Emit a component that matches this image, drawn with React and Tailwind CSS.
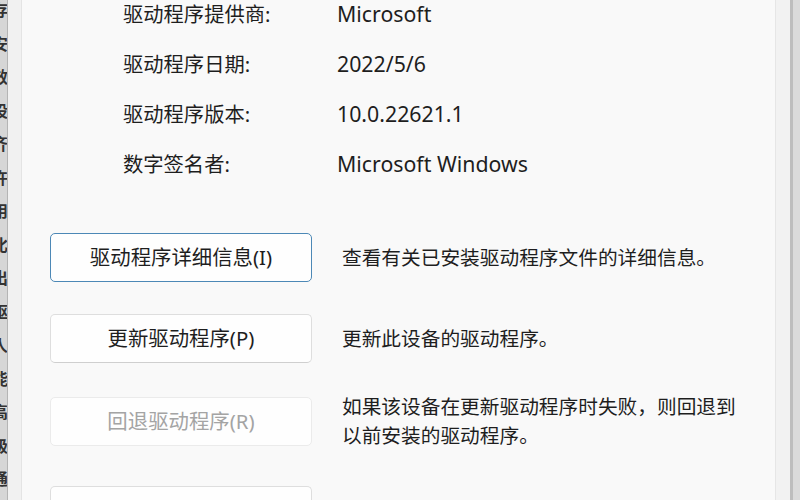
import React from 'react'

// ── Data ──────────────────────────────────────────────────────────────────
const info = [
  { label: '驱动程序提供商:', value: 'Microsoft' },
  { label: '驱动程序日期:', value: '2022/5/6' },
  { label: '驱动程序版本:', value: '10.0.22621.1' },
  { label: '数字签名者:', value: 'Microsoft Windows' },
]

const actions = [
  { text: '驱动程序详细信息(I)', desc: ['查看有关已安装驱动程序文件的详细信息。'], focused: true, mt: 'mt-0' },
  { text: '更新驱动程序(P)', desc: ['更新此设备的驱动程序。'], mt: 'mt-[32px]' },
  { text: '回退驱动程序(R)', desc: ['如果该设备在更新驱动程序时失败，则回退到', '以前安装的驱动程序。'], disabled: true, mt: 'mt-[29px]' },
  { text: '卸载设备(U)', desc: ['从系统中删除设备(高级)。'], mt: 'mt-[36px]' },
]

// background window peeking out on the left
const behind = ['存', '安', '效', '设', '齐', '许', '用', '比', '出', '驱', '人', '能', '高', '级', '通', '属']

function ActionButton({ text, focused, disabled }) {
  const border = focused
    ? 'border-[1.5px] border-[#4c88b6]'
    : disabled
      ? 'border border-[#ebebeb]'
      : 'border border-[#dedede] border-b-[#cfcfcf]'
  return (
    <button
      disabled={disabled}
      className={`w-[262px] h-[49px] shrink-0 rounded-[5px] bg-[#fefefe] ${border} ${disabled ? 'text-[#a4a4a4]' : 'text-[#1e1e1e]'} text-[20.4px] leading-none`}
    >
      {text}
    </button>
  )
}

export default function App() {
  return (
    <div
      className="w-[800px] h-[500px] overflow-hidden flex bg-[#f9f9f9] text-[#1e1e1e]"
      style={{ fontFamily: '"Noto Sans", "Noto Sans CJK SC", sans-serif' }}
    >
      {/* window behind */}
      <div className="w-[8px] shrink-0 overflow-hidden bg-[#d6d6d6] border-r border-[#b4b4b4]">
        <div className="-ml-[8px] -mt-[6px] flex flex-col text-[16px] font-bold leading-[33.5px] text-[#333333]">
          {behind.map((c, i) => <span key={i}>{c}</span>)}
        </div>
      </div>
      <div className="w-[14px] shrink-0 bg-[#f1f1f1] border-r border-[#e4e4e4]" />

      {/* dialog body */}
      <div className="flex-1 min-w-0 flex flex-col">
        {/* driver info */}
        <div className="-mt-[11px] pl-[101px] flex flex-col">
          {info.map((r) => (
            <div key={r.label} className="h-[50px] flex items-center">
              <span className="w-[214px] shrink-0 text-[20.3px]">{r.label}</span>
              <span className="text-[21.3px]">{r.value}</span>
            </div>
          ))}
        </div>

        {/* actions */}
        <div className="mt-[44px] pl-[28px] flex flex-col">
          {actions.map((a) => (
            <div key={a.text} className={`${a.mt} flex items-center gap-[30px]`}>
              <ActionButton {...a} />
              <div className="flex flex-col text-[19.7px] leading-[29px] whitespace-nowrap">
                {a.desc.map((l) => <span key={l}>{l}</span>)}
              </div>
            </div>
          ))}
        </div>
      </div>

      {/* right edge: scrollbar track + frame */}
      <div className="w-[15px] shrink-0 bg-[#f2f2f2] border-l border-[#e6e6e6]" />
      <div className="w-[3px] shrink-0 bg-[#bdbdbd]" />
      <div className="w-[7px] shrink-0 bg-[#dadada]" />
    </div>
  )
}
